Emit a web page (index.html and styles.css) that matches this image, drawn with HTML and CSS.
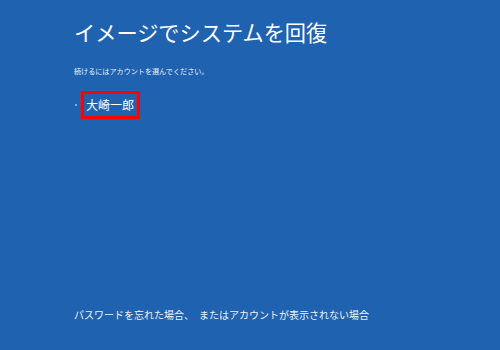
FILE: index.html
```
<!DOCTYPE html>
<html lang="ja">
<head>
<meta charset="utf-8">
<link rel="stylesheet" href="styles.css">
</head>
<body>
<main class="screen">
  <h1 class="title">イメージでシステムを回復</h1>
  <p class="subtitle">続けるにはアカウントを選んでください。</p>
  <ul class="accounts">
    <li class="account"><span class="dot"></span><span class="name">大崎一郎</span></li>
  </ul>
  <p class="footer">パスワードを忘れた場合、　またはアカウントが表示されない場合</p>
</main>
</body>
</html>
```
FILE: styles.css
```
html, body {
  margin: 0;
  padding: 0;
  background: #1f63b0;
}
.screen {
  box-sizing: border-box;
  width: 500px;
  height: 350px;
  display: flex;
  flex-direction: column;
  padding: 18px 0 0 74px;
  font-family: "Noto Sans CJK JP", "Noto Sans", sans-serif;
  color: #ffffff;
}
.title {
  margin: 0;
  font-size: 21.2px;
  font-weight: 400;
  line-height: 28px;
}
.subtitle {
  margin: 20px 0 0;
  font-size: 7.1px;
  line-height: 10px;
  color: #e8eef8;
}
.accounts {
  list-style: none;
  margin: 15px 0 0;
  padding: 0;
}
.account {
  display: flex;
  align-items: center;
  gap: 4px;
  margin-left: 1px;
}
.dot {
  width: 2px;
  height: 2px;
  background: #4fc3f7;
}
.name {
  box-sizing: border-box;
  height: 28px;
  padding: 0 3px 0 2px;
  border: 3px solid #ff0000;
  font-size: 12px;
  line-height: 22px;
}
.footer {
  margin: auto 0 0;
  padding-bottom: 28px;
  font-size: 10px;
  line-height: 14px;
  color: #eef2fa;
}
```
